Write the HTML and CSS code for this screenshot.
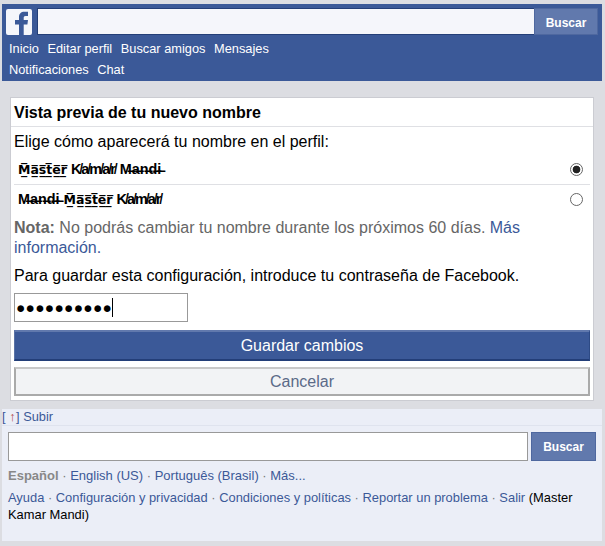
FILE: index.html
```html
<!DOCTYPE html>
<html lang="es">
<head>
<meta charset="UTF-8" />
<title>Vista previa de tu nuevo nombre</title>
<link rel="stylesheet" href="styles.css">
</head>
<body>
  <header class="topbar">
    <form class="top-search">
      <a class="logo" href="#">
        <svg viewBox="0 0 26 26" width="26" height="26">
          <path fill="#3b5998" d="M13 26V15.500H9V11h4V8.200c0-3.600 2-5.500 5.400-5.500H22v4.200h-2.400c-1.500 0-1.900.7-1.900 2V11h4.300l-.6 4.500h-3.700V26z"/>
        </svg>
      </a>
      <input class="top-input" type="text" />
      <button class="top-btn" type="button">Buscar</button>
    </form>
    <nav class="top-nav">
      <a href="#">Inicio</a>
      <a href="#">Editar perfil</a>
      <a href="#">Buscar amigos</a>
      <a href="#">Mensajes</a>
      <a href="#">Notificaciones</a>
      <a href="#">Chat</a>
    </nav>
  </header>

  <main class="card">
    <h2 class="card-title">Vista previa de tu nuevo nombre</h2>
    <div class="card-body">
      <p class="intro">Elige cómo aparecerá tu nombre en el perfil:</p>
      <label class="name-row first">
        <span class="name"><span class="fancy">M̲̅a̲̅s̲̅t̲̅e̲̅r̲̅</span> K̸a̸m̸a̸r̸ M̶a̶n̶d̶i̶</span>
        <input type="radio" name="display" checked />
      </label>
      <label class="name-row last">
        <span class="name">M̶a̶n̶d̶i̶ <span class="fancy">M̲̅a̲̅s̲̅t̲̅e̲̅r̲̅</span> K̸a̸m̸a̸r̸</span>
        <input type="radio" name="display" />
      </label>
      <p class="note"><b>Nota:</b> No podrás cambiar tu nombre durante los próximos 60 días. <a href="#">Más información.</a></p>
      <p class="pass-hint">Para guardar esta configuración, introduce tu contraseña de Facebook.</p>
      <div class="pass-box"><span class="dots">●●●●●●●●●●</span><span class="caret"></span></div>
      <button class="btn-save" type="button">Guardar cambios</button>
      <button class="btn-cancel" type="button">Cancelar</button>
    </div>
  </main>

  <footer class="foot">
    <div class="up">[ <span class="arrow">↑</span> ] <a href="#">Subir</a></div>
    <div class="foot-body">
      <form class="foot-search">
        <input class="foot-input" type="text" />
        <button class="foot-btn" type="button">Buscar</button>
      </form>
      <p class="langs"><b>Español</b> · <a href="#">English (US)</a> · <a href="#">Português (Brasil)</a> · <a href="#">Más...</a></p>
      <p class="links"><a href="#">Ayuda</a> · <a href="#">Configuración y privacidad</a> · <a href="#">Condiciones y políticas</a> · <a href="#">Reportar un problema</a> · <a href="#">Salir</a> <span class="who">(Master Kamar Mandi)</span></p>
    </div>
  </footer>
</body>
</html>
```

FILE: styles.css
```css
* {
  box-sizing: border-box;
}
html, body {
  margin: 0;
  padding: 0;
}
body {
  background: #dcdde2;
  font-family: "Liberation Sans", Arial, sans-serif;
  color: #000;
  padding: 4px 3px 5px 2px;
  height: 546px;
  overflow: hidden;
}
a {
  color: #3b5998;
  text-decoration: none;
}
p {
  margin: 0;
}

/* top bar */
.topbar {
  background: #3b5998;
  height: 77px;
  padding: 4px 4px 0 4px;
}
.top-search {
  display: flex;
  height: 27px;
}
.logo {
  width: 26px;
  height: 26px;
  margin-top: 1px;
  background: #f5f6fb;
  border-radius: 2px;
  display: block;
}
.logo svg {
  display: block;
}
.top-input {
  flex: 1;
  margin-left: 5px;
  border: 0;
  border-top: 1px solid #243f78;
  border-bottom: 1px solid #243f78;
  border-left: 1px solid #243f78;
  background: #f5f6fb;
}
.top-btn {
  width: 64px;
  background: #6179ad;
  border: 1px solid #4f689f;
  color: #fff;
  font: bold 12px "Liberation Sans", Arial, sans-serif;
  padding: 2px 0 0 0;
}
.top-nav {
  display: flex;
  flex-wrap: wrap;
  column-gap: 8.6px;
  max-width: 300px;
  padding-left: 3px;
  margin-top: 3px;
}
.top-nav a {
  color: #fff;
  font-size: 12.8px;
  line-height: 21px;
}

/* card */
.card {
  margin: 16px 8px 0 8px;
  background: #fff;
  border: 1px solid #cbccd2;
  height: 304px;
}
.card-title {
  margin: 0;
  font-size: 16px;
  height: 29px;
  line-height: 29px;
  padding-left: 3px;
  border-bottom: 1px solid #dfe0e4;
}
.card-body {
  padding: 0 3px;
}
.intro {
  font-size: 16px;
  line-height: 17px;
  margin-top: 6px;
}
.name-row {
  display: flex;
  justify-content: space-between;
  align-items: center;
  padding: 0 4px;
}
.name-row.first {
  height: 35px;
  padding-top: 4px;
  border-bottom: 1px solid #dfe0e4;
}
.name-row.last {
  height: 29px;
}
.name-row input {
  appearance: none;
  margin: 0 3px 0 0;
  width: 13px;
  height: 13px;
  border: 1px solid #666;
  border-radius: 50%;
  background: #fff;
}
.name-row input:checked {
  background: radial-gradient(circle, #222 0 3.5px, #fff 4.2px);
}
.name {
  font-size: 14.4px;
  font-weight: bold;
  line-height: 20px;
}
.fancy {
  font-family: "DejaVu Sans", sans-serif;
  font-size: 12.5px;
}
.note {
  font-size: 16px;
  line-height: 20px;
  color: #666;
  margin-top: 4px;
}
.pass-hint {
  font-size: 16px;
  line-height: 18px;
  margin-top: 9px;
}
.pass-box {
  width: 174px;
  height: 29px;
  margin-top: 8px;
  border: 1px solid #999;
  display: flex;
  align-items: center;
  padding-left: 1px;
}
.dots {
  font-size: 15.5px;
  line-height: 1;
  letter-spacing: 0.25px;
}
.caret {
  width: 1px;
  height: 19px;
  background: #000;
}
.btn-save, .btn-cancel {
  display: block;
  width: 100%;
  font: 16px "Liberation Sans", Arial, sans-serif;
  padding: 0;
}
.btn-save {
  height: 31px;
  margin-top: 8px;
  background: #3b5998;
  color: #fff;
  border: 0;
  border-top: 2px solid #6179ad;
  border-bottom: 2px solid #233e78;
  border-left: 1px solid #5a72a5;
  border-right: 1px solid #2d4a85;
}
.btn-cancel {
  height: 29px;
  margin-top: 6px;
  background: #f2f3f5;
  color: #5b6a88;
  border: 2px solid #aaa;
  border-top-color: #c8c8c8;
}

/* footer */
.foot {
  margin-top: 8px;
  background: #ebeef7;
  height: 132px;
}
.up {
  height: 17px;
  line-height: 16px;
  font-size: 12.8px;
  color: #3b5998;
  border-bottom: 1px solid #dfe3ee;
}
.arrow {
  color: #b04a4a;
  margin-right: -3px;
}
.foot-body {
  padding: 6px 6px 0 6px;
}
.foot-search {
  display: flex;
  height: 29px;
  gap: 3px;
}
.foot-input {
  flex: 1;
  border: 1px solid #999;
  background: #fff;
}
.foot-btn {
  width: 65px;
  background: #6179ad;
  border: 1px solid #4f689f;
  color: #fff;
  font: bold 12px "Liberation Sans", Arial, sans-serif;
  padding: 1px 0 0 0;
}
.langs, .links {
  color: #777;
}
.langs {
  font-size: 13px;
  margin-top: 5px;
  line-height: 20px;
}
.links {
  font-size: 12.9px;
  margin-top: 3px;
  line-height: 17px;
}
.langs b {
  color: #888;
}
.who {
  color: #000;
}
```
